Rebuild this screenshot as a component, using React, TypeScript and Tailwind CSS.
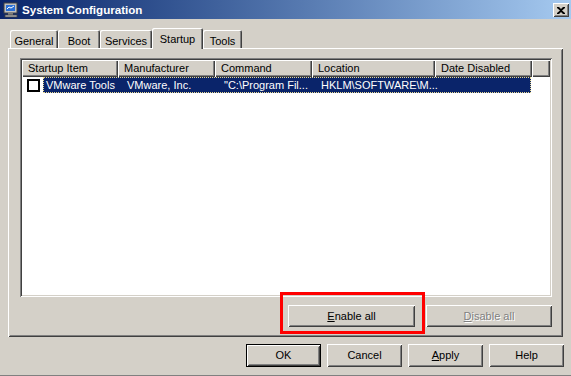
import React from 'react';

const raised =
  'shadow-[inset_1px_1px_0_#ffffff,inset_-1px_-1px_0_#404040,inset_2px_2px_0_#d4d0c8,inset_-2px_-2px_0_#808080]';
const sunken =
  'shadow-[inset_1px_1px_0_#808080,inset_-1px_-1px_0_#ffffff,inset_2px_2px_0_#404040,inset_-2px_-2px_0_#d4d0c8]';
const headerCell =
  'shadow-[inset_1px_1px_0_#ffffff,inset_-1px_-1px_0_#404040,inset_-2px_-2px_0_#808080]';

const tabs = [
  { label: 'General', w: 'w-[48px]' },
  { label: 'Boot', w: 'w-[42px]' },
  { label: 'Services', w: 'w-[52px]' },
  { label: 'Startup', w: 'w-[51px]', active: true },
  { label: 'Tools', w: 'w-[39px]' },
];

const columns = [
  { label: 'Startup Item', w: 'w-[96px]' },
  { label: 'Manufacturer', w: 'w-[97px]' },
  { label: 'Command', w: 'w-[97px]' },
  { label: 'Location', w: 'w-[123px]' },
  { label: 'Date Disabled', w: 'w-[97px]' },
];

function AppIcon() {
  return (
    <svg width="16" height="16" viewBox="0 0 16 16">
      <rect x="1" y="1" width="13" height="10" fill="#c0c0c0" stroke="#404040" />
      <rect x="3" y="3" width="9" height="6" fill="#2a6fd6" />
      <path d="M4 7 L6 5 L8 6 L11 4" stroke="#ffffff" fill="none" strokeWidth="1" />
      <rect x="5" y="11" width="5" height="2" fill="#808080" />
      <rect x="2" y="13" width="12" height="2" fill="#c0c0c0" stroke="#404040" strokeWidth="0.8" />
    </svg>
  );
}

function Button({ children, className = '', isDefault = false, disabled = false }: { children: React.ReactNode; className?: string; isDefault?: boolean; disabled?: boolean }) {
  const inner = (
    <div className={`flex h-full w-full items-center justify-center bg-[#d4d0c8] ${raised} ${disabled ? 'text-[#808080] [text-shadow:1px_1px_0_#ffffff]' : 'text-black'}`}>
      {children}
    </div>
  );
  if (isDefault) {
    return <div className={`border border-black ${className}`}>{inner}</div>;
  }
  return <div className={className}>{inner}</div>;
}

export default function App() {
  return (
    <div className="relative h-[376px] w-[571px] overflow-hidden bg-[#d4d0c8] text-[11px] text-black font-['Liberation_Sans',Arial,sans-serif] shadow-[inset_0_-1px_0_#808080]">
      {/* title bar */}
      <div className="flex h-[19px] items-center bg-gradient-to-r from-[#0a246a] to-[#a6caf0] pl-[3px] pr-[2px]">
        <AppIcon />
        <span className="ml-[3px] text-[11.6px] font-bold text-white">System Configuration</span>
        <div className={`ml-auto mt-[1px] flex h-[14px] w-[16px] items-center justify-center bg-[#d4d0c8] ${raised}`}>
          <svg width="8" height="7" viewBox="0 0 8 7">
            <path d="M0 0h2l2 2 2-2h2v1L5 3.5 8 6v1H6L4 5 2 7H0V6l3-2.5L0 1z" fill="#000" />
          </svg>
        </div>
      </div>

      {/* tabs */}
      <div className="flex h-[29px] items-end pl-[10px]">
        {tabs.map((t) =>
          t.active ? (
            <div
              key={t.label}
              className={`relative z-10 -mb-px flex h-[21px] ${t.w} items-start justify-center rounded-t-[2px] bg-[#d4d0c8] pt-[3px] shadow-[inset_1px_1px_0_#ffffff,inset_-1px_0_0_#404040,inset_-2px_0_0_#808080]`}
            >
              {t.label}
            </div>
          ) : (
            <div
              key={t.label}
              className={`flex h-[18px] ${t.w} items-start justify-center rounded-t-[2px] bg-[#d4d0c8] pt-[3px] shadow-[inset_1px_1px_0_#ffffff,inset_-1px_0_0_#404040,inset_-2px_0_0_#808080]`}
            >
              {t.label}
            </div>
          )
        )}
      </div>

      {/* tab panel */}
      <div className={`ml-[8px] flex h-[289px] w-[555px] flex-col pl-[12px] pt-[10px] ${raised}`}>
        <div className={`flex h-[239px] w-[532px] flex-col bg-white p-[2px] ${sunken}`}>
          <div className="flex h-[17px] bg-[#d4d0c8]">
            {columns.map((c) => (
              <div key={c.label} className={`flex h-full ${c.w} items-center pl-[6px] ${headerCell}`}>
                {c.label}
              </div>
            ))}
            <div className={`h-full flex-1 ${headerCell}`} />
          </div>
          <div className="flex h-[16px] items-center">
            <div className="ml-[5px] mr-[3px] h-[13px] w-[13px] border-2 border-black bg-white" />
            <div className="flex h-full w-[488px] items-center border border-dotted border-[#e8d890] bg-[#0a246a] text-white">
              <span className="w-[77px] pl-[2px]">VMware Tools</span>
              <span className="w-[97px] pl-[6px]">VMware, Inc.</span>
              <span className="w-[97px] pl-[6px]">"C:\Program Fil...</span>
              <span className="pl-[6px]">HKLM\SOFTWARE\M...</span>
            </div>
          </div>
        </div>
        <div className="mt-[8px] flex w-[532px] justify-end gap-[11px]">
          <Button className="h-[22px] w-[127px]">
            <span><u>E</u>nable all</span>
          </Button>
          <Button className="h-[22px] w-[126px]" disabled>
            <span><u>D</u>isable all</span>
          </Button>
        </div>
      </div>

      {/* dialog buttons */}
      <div className="mt-[7px] flex justify-end gap-[6px] pr-[7px]">
        <Button isDefault className="h-[23px] w-[75px]">OK</Button>
        <Button className="h-[23px] w-[75px]">Cancel</Button>
        <Button className="h-[23px] w-[75px]">
          <span><u>A</u>pply</span>
        </Button>
        <Button className="h-[23px] w-[75px]">Help</Button>
      </div>

      {/* highlight */}
      <div className="absolute left-[280px] top-[292px] h-[42px] w-[145px] border-[3px] border-[#ff0000]" />
    </div>
  );
}
